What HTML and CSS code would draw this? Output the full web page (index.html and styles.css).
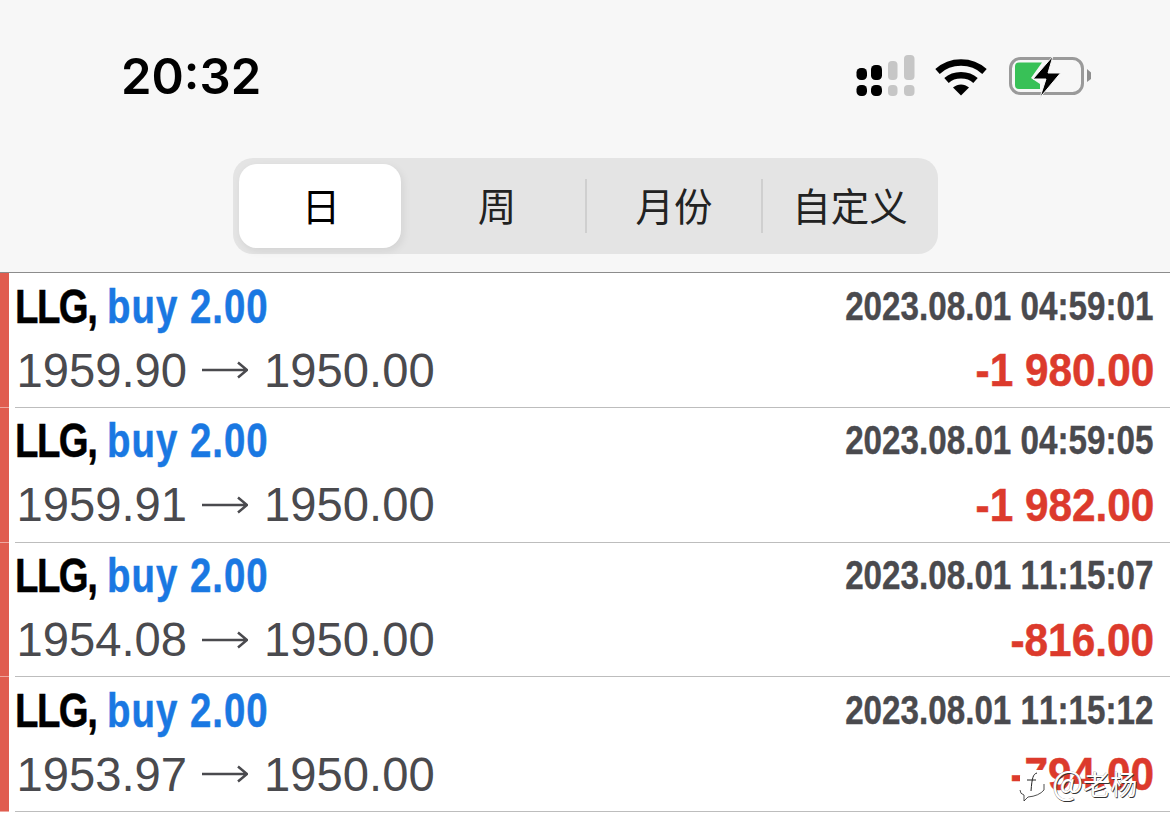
FILE: index.html
```html
<!DOCTYPE html>
<html lang="zh">
<head>
<meta charset="utf-8">
<title>交易历史</title>
<link rel="stylesheet" href="styles.css">
</head>
<body>
<div class="screen">
  <header class="top">
    <div class="status">
      <span class="time">20:32</span>
      <div class="icons">
        <svg class="ic-signal" width="60" height="44" viewBox="0 0 60 44">
          <rect x="0.500" y="13" width="10.500" height="12" rx="4.500" fill="#000"/>
          <rect x="15" y="10" width="11" height="15" rx="4.500" fill="#000"/>
          <rect x="32" y="6" width="9.500" height="19" rx="4" fill="#c6c6c6"/>
          <rect x="48" y="0" width="10.500" height="25" rx="4" fill="#c6c6c6"/>
          <rect x="0.500" y="30" width="10.500" height="11" rx="4.500" fill="#000"/>
          <rect x="15" y="30" width="11" height="11" rx="4.500" fill="#000"/>
          <rect x="32" y="30" width="9.500" height="11" rx="4" fill="#c6c6c6"/>
          <rect x="48" y="30" width="10.500" height="11" rx="4" fill="#c6c6c6"/>
        </svg>
        <svg class="ic-wifi" width="52" height="38" viewBox="0 0 52 38">
          <path d="M2.500 13.500C15.500 1.500 36.500 1.500 49.500 13.500" fill="none" stroke="#000" stroke-width="6.500"/>
          <path d="M11.500 22.500C19 15.500 33 15.500 40.500 22.500" fill="none" stroke="#000" stroke-width="6.500"/>
          <path d="M18 29.500C23 25.500 29 25.500 34 29.500L26 37.500Z" fill="#000"/>
        </svg>
        <svg class="ic-battery" width="84" height="44" viewBox="0 0 84 44">
          <rect x="1.500" y="3.500" width="72" height="35" rx="10" fill="none" stroke="#9a9a9a" stroke-width="3"/>
          <path d="M10 7.500H33L22 23L31 29V34H10Q6 34 6 30V11.500Q6 7.500 10 7.500Z" fill="#38c157"/>
          <path d="M78 14L82 17.500V24L78 27Z" fill="#8e8e8e"/>
          <path d="M44 1L24 24H37L31 42.500L51.500 18H39Z" fill="#000" stroke="#f7f7f7" stroke-width="1"/>
        </svg>
      </div>
    </div>
    <div class="seg">
      <div class="seg-thumb"></div>
      <div class="seg-cell seg-on">日</div>
      <div class="seg-cell">周</div>
      <div class="seg-cell seg-sep">月份</div>
      <div class="seg-cell seg-sep">自定义</div>
    </div>
  </header>
  <main class="list">
    <article class="row">
      <div class="bar"></div>
      <div class="body">
        <div class="line"><span class="name"><b>LLG,</b> <i>buy 2.00</i></span><span class="date">2023.08.01 04:59:01</span></div>
        <div class="line"><span class="price">1959.90<svg class="arrow" width="46" height="20" viewBox="0 0 46 20"><path d="M0 10H45M36 2.500L45 10L36 17.500" fill="none" stroke="#4a4a4e" stroke-width="2.500"/></svg>1950.00</span><span class="amt">-1 980.00</span></div>
      </div>
    </article>
    <article class="row">
      <div class="bar"></div>
      <div class="body">
        <div class="line"><span class="name"><b>LLG,</b> <i>buy 2.00</i></span><span class="date">2023.08.01 04:59:05</span></div>
        <div class="line"><span class="price">1959.91<svg class="arrow" width="46" height="20" viewBox="0 0 46 20"><path d="M0 10H45M36 2.500L45 10L36 17.500" fill="none" stroke="#4a4a4e" stroke-width="2.500"/></svg>1950.00</span><span class="amt">-1 982.00</span></div>
      </div>
    </article>
    <article class="row">
      <div class="bar"></div>
      <div class="body">
        <div class="line"><span class="name"><b>LLG,</b> <i>buy 2.00</i></span><span class="date">2023.08.01 11:15:07</span></div>
        <div class="line"><span class="price">1954.08<svg class="arrow" width="46" height="20" viewBox="0 0 46 20"><path d="M0 10H45M36 2.500L45 10L36 17.500" fill="none" stroke="#4a4a4e" stroke-width="2.500"/></svg>1950.00</span><span class="amt">-816.00</span></div>
      </div>
    </article>
    <article class="row">
      <div class="bar"></div>
      <div class="body">
        <div class="line"><span class="name"><b>LLG,</b> <i>buy 2.00</i></span><span class="date">2023.08.01 11:15:12</span></div>
        <div class="line"><span class="price">1953.97<svg class="arrow" width="46" height="20" viewBox="0 0 46 20"><path d="M0 10H45M36 2.500L45 10L36 17.500" fill="none" stroke="#4a4a4e" stroke-width="2.500"/></svg>1950.00</span><span class="amt">-794.00</span></div>
      </div>
    </article>
  </main>
  <div class="mark">
    <svg class="mark-logo" width="28" height="34" viewBox="0 0 28 34">
      <path d="M8 2H26V22Q21 28 10 29L6 33V27Q2 26 2 22V8Q2 2 8 2Z" fill="#fff"/>
      <path d="M6 33V27Q2 26 2 22M26 16V22Q21 28 10 29L6 33" fill="none" stroke="#222" stroke-width="0.800"/>
      <path d="M19 5C15 6 14 10 13 23M9 12H18" fill="none" stroke="#222" stroke-width="1"/>
    </svg>
    <span class="mark-text"><span class="mark-at">@</span>老杨</span>
  </div>
</div>
</body>
</html>
```
FILE: styles.css
```css
* { box-sizing: border-box; }
html, body { margin: 0; padding: 0; }
body {
  width: 1170px;
  height: 826px;
  overflow: hidden;
  background: #fff;
  font-family: "Liberation Sans", Arial, sans-serif;
  font-kerning: none;
}
.screen { position: relative; width: 1170px; height: 826px; overflow: hidden; }
.top { height: 272px; background: #f7f7f7; padding-top: 52px; }
.status {
  height: 50px;
  display: flex;
  align-items: center;
  justify-content: space-between;
  padding: 0 77px 0 121px;
}
.time {
  font-family: Inter, "Liberation Sans", sans-serif;
  font-weight: 600;
  font-size: 49px;
  line-height: 50px;
  color: #000;
}
.icons { display: flex; align-items: center; }
.ic-signal { margin-right: 19px; }
.ic-wifi { margin-right: 22px; }
.seg {
  position: relative;
  margin: 56px 0 0 233px;
  width: 705px;
  height: 96px;
  background: #e4e4e4;
  border-radius: 20px;
  display: grid;
  grid-template-columns: repeat(4, 176px);
  align-items: center;
  font-family: "Noto Sans CJK SC", sans-serif;
  font-size: 38.500px;
  color: #222;
}
.seg-thumb {
  position: absolute;
  left: 6px;
  top: 6px;
  width: 162px;
  height: 84px;
  background: #fff;
  border-radius: 18px;
  box-shadow: 2px 3px 8px rgba(0, 0, 0, 0.08);
}
.seg-cell { position: relative; height: 54px; line-height: 50px; text-align: center; }
.seg-on { color: #000; }
.seg-sep { border-left: 2px solid #cfcfcf; }
.list { border-top: 1px solid #8c8c8c; }
.row { display: flex; height: 134.750px; }
.bar { width: 9px; background: #e05c4f; border-bottom: 1.500px solid #eea79f; }
.body {
  flex: 1;
  margin-left: 6px;
  padding: 1px 15px 0 0;
  border-bottom: 1.500px solid #bdbdbd;
}
.line {
  height: 64px;
  display: flex;
  align-items: center;
  justify-content: space-between;
  white-space: nowrap;
}
.name {
  display: inline-block;
  font-size: 48px;
  font-weight: 700;
  -webkit-text-stroke: 0.500px currentColor;
  transform: scaleX(0.8);
  transform-origin: left center;
}
.name b { color: #000; letter-spacing: -1.900px; }
.name i { font-style: normal; color: #1a78e2; letter-spacing: 1.250px; }
.date {
  display: inline-block;
  font-size: 40px;
  font-weight: 700;
  color: #4a4a4e;
  -webkit-text-stroke: 0.400px currentColor;
  transform: scaleX(0.83);
  transform-origin: right center;
  margin-right: 2px;
}
.price {
  display: flex;
  align-items: center;
  padding-left: 1.500px;
  font-size: 47.200px;
  color: #4a4a4e;
}
.arrow { margin: 0 16px 0 15px; }
.amt {
  display: inline-block;
  font-size: 46px;
  font-weight: 700;
  color: #dc3a2c;
  -webkit-text-stroke: 0.500px currentColor;
  transform: scaleX(0.92);
  transform-origin: right center;
  margin-right: 1px;
}
.mark {
  position: absolute;
  left: 1018px;
  top: 762px;
  display: flex;
  align-items: center;
  gap: 6px;
}
.mark-logo { margin-top: 6px; }
.mark-text {
  font-family: "Noto Sans CJK SC", sans-serif;
  font-size: 27px;
  line-height: 36px;
  color: #fff;
  text-shadow: 0.700px 0.700px 0 #333, -0.300px -0.300px 0 #777;
}
.mark-at { font-size: 33px; }
```
